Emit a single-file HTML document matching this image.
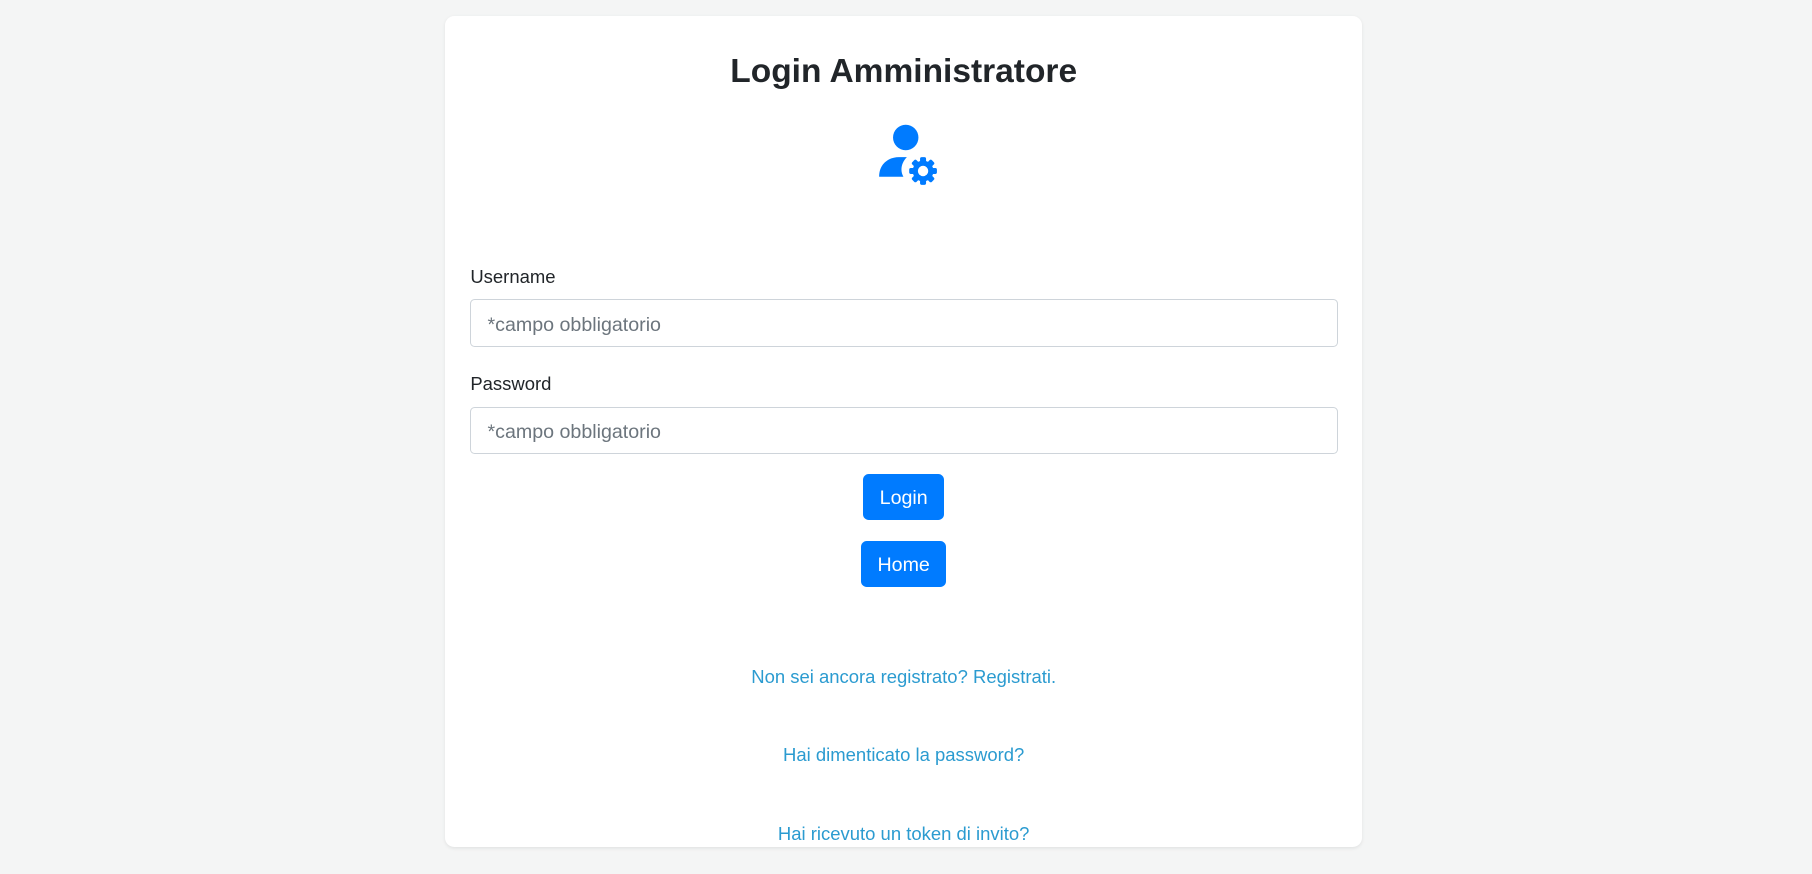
<!DOCTYPE html>
<html><head><meta charset="utf-8"><style>
html,body{margin:0;padding:0;background:#f4f5f5;width:1812px;height:874px;overflow:hidden}
#w{zoom:1.15561;width:1568px;height:756px;position:relative;font-family:"Liberation Sans",sans-serif;color:#212529}
.card{position:absolute;left:385px;top:14px;width:794px;height:719px;background:#fff;border-radius:8px;box-shadow:0 1px 3px rgba(0,0,0,.08);overflow:hidden}
h1{position:absolute;left:0;right:0;top:30px;margin:0;text-align:center;font-size:29px;font-weight:bold;line-height:36px}
.icon{position:absolute;left:375px;top:89px}
label{position:absolute;left:22px;font-size:16px}
.inp{position:absolute;left:22px;width:751px;height:41px;border:1px solid #ced4da;border-radius:4px;box-sizing:border-box;padding-left:14px;padding-top:3px;line-height:38px;font-size:17px;color:#6c757d}
.btn{position:absolute;height:40px;background:#007bff;color:#fff;border-radius:5px;font-size:17px;line-height:43px;text-align:center}
.lnk{position:absolute;left:0;right:0;text-align:center;color:#2b9bd0;font-size:16px}
</style></head><body><div id="w">
<div class="card">
<h1>Login Amministratore</h1>
<svg class="icon" width="54" height="62" viewBox="0 0 54 62">
<circle cx="24" cy="16" r="11" fill="#007bff"/>
<path d="M1 50 C1 38 10 33 18 33 L25 33 C20 38 19 45 22 50 Z" fill="#007bff"/>
<g transform="translate(39,45)" fill="#007bff">
<circle r="9"/>
<g><rect x="-2.6" y="-12" width="5.2" height="24" rx="1.5"/><rect x="-2.6" y="-12" width="5.2" height="24" rx="1.5" transform="rotate(45)"/><rect x="-2.6" y="-12" width="5.2" height="24" rx="1.5" transform="rotate(90)"/><rect x="-2.6" y="-12" width="5.2" height="24" rx="1.5" transform="rotate(135)"/></g>
<circle r="4.5" fill="#fff"/>
</g>
</svg>
<label style="top:216px">Username</label>
<div class="inp" style="top:245px">*campo obbligatorio</div>
<label style="top:309px">Password</label>
<div class="inp" style="top:338px">*campo obbligatorio</div>
<div class="btn" style="left:362px;top:396px;width:70px">Login</div>
<div class="btn" style="left:360px;top:454px;width:74px">Home</div>
<div class="lnk" style="top:562px">Non sei ancora registrato? Registrati.</div>
<div class="lnk" style="top:630px">Hai dimenticato la password?</div>
<div class="lnk" style="top:698px">Hai ricevuto un token di invito?</div>
</div>
</div></body></html>
